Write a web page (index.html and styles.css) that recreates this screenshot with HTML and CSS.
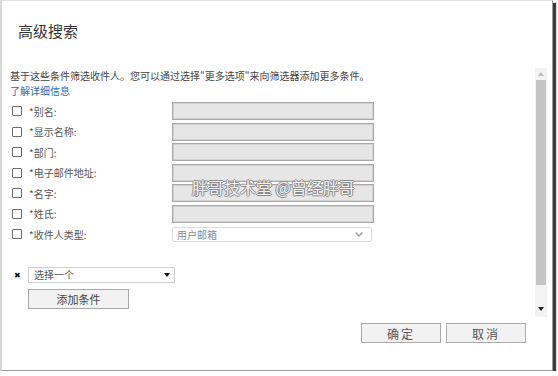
FILE: index.html
```html
<!DOCTYPE html>
<html lang="zh-CN">
<head>
    <meta charset="UTF-8">
    <title>高级搜索</title>
    <link rel="stylesheet" href="styles.css">
</head>
<body>
    <div class="dialog">
        <div class="title">高级搜索</div>
        <div class="body">
            <div class="content">
                <p class="desc">基于这些条件筛选收件人。您可以通过选择"更多选项"来向筛选器添加更多条件。</p>
                <a class="more" href="#">了解详细信息</a>
                <div class="rows">
                    <div class="row"><span class="check"></span><span class="label">*别名:</span><span class="field"></span></div>
                    <div class="row"><span class="check"></span><span class="label">*显示名称:</span><span class="field"></span></div>
                    <div class="row"><span class="check"></span><span class="label">*部门:</span><span class="field"></span></div>
                    <div class="row"><span class="check"></span><span class="label">*电子邮件地址:</span><span class="field"></span></div>
                    <div class="row"><span class="check"></span><span class="label">*名字:</span><span class="field"></span></div>
                    <div class="row"><span class="check"></span><span class="label">*姓氏:</span><span class="field"></span></div>
                    <div class="row"><span class="check"></span><span class="label">*收件人类型:</span>
                        <span class="combo">用户邮箱
                            <svg class="chevron" width="8" height="5" viewBox="0 0 8 5"><path d="M0.5 0.5 L4 4 L7.5 0.5" fill="none" stroke="#999" stroke-width="1.3"/></svg>
                        </span>
                    </div>
                </div>
                <div class="cond">
                    <span class="remove">&#x2716;</span>
                    <span class="picker">选择一个
                        <svg class="caret" width="6" height="4" viewBox="0 0 6 4"><path d="M0 0 H6 L3 4 Z" fill="#111"/></svg>
                    </span>
                </div>
                <button class="btn add">添加条件</button>
            </div>
            <div class="scrollbar">
                <div class="arrow up"><svg width="6" height="4" viewBox="0 0 6 4"><path d="M0 4 H6 L3 0 Z" fill="#bbb"/></svg></div>
                <div class="thumb"></div>
                <div class="track"></div>
                <div class="arrow down"><svg width="6" height="4" viewBox="0 0 6 4"><path d="M0 0 H6 L3 4 Z" fill="#222"/></svg></div>
            </div>
        </div>
        <div class="footer">
            <button class="btn">确定</button>
            <button class="btn">取消</button>
        </div>
        <div class="watermark">胖哥技术堂 @曾经胖哥</div>
    </div>
</body>
</html>
```

FILE: styles.css
```css
/* Base */
body {
    margin: 0;
    background-color: #fff;
    font-family: "Noto Sans CJK SC", "Noto Sans", sans-serif;
    color: #444;
}

/* Dialog frame */
.dialog {
    position: relative;
    width: 553px;
    height: 371px;
    box-sizing: border-box;
    background-color: #fff;
    border-top: 1px solid #e2e2e2;
    border-left: 2px solid #d8d8d8;
    border-right: 1px solid #9a9a9a;
    border-bottom: 1px solid #9a9a9a;
    box-shadow: 3px 3px 1px #3c3c3c;
    display: flex;
    flex-direction: column;
}

.title {
    height: 67px;
    box-sizing: border-box;
    padding: 21px 0 0 16px;
    font-size: 15px;
    line-height: 18px;
    color: #333;
}

.body {
    height: 249px;
    display: flex;
}

.content {
    flex: 1;
    padding-left: 8px;
}

.desc {
    margin: 0;
    padding-top: 1px;
    font-size: 10px;
    line-height: 14.5px;
    color: #444;
}

.more {
    display: block;
    font-size: 10px;
    line-height: 14.5px;
    color: #1a6db8;
    text-decoration: none;
}

/* Criteria rows */
.rows {
    margin-top: 3px;
}

.row {
    height: 20.5px;
    display: flex;
    align-items: center;
}

.check {
    width: 8px;
    height: 8px;
    margin-left: 2px;
    border: 1px solid #6a6a6a;
    border-radius: 1px;
    background-color: #fff;
}

.label {
    width: 143px;
    margin-left: 7px;
    font-size: 10px;
    color: #555;
}

.field {
    width: 202px;
    height: 18px;
    box-sizing: border-box;
    background-color: #e6e6e6;
    border: 1px solid #a8a8a8;
    box-shadow: inset 0 0 0 1px #d2d2d2;
}

.combo {
    width: 200px;
    height: 15px;
    margin-top: 1px;
    box-sizing: border-box;
    border: 1px solid #dcdcdc;
    border-radius: 3px;
    padding-left: 4px;
    font-size: 10px;
    line-height: 13px;
    color: #8a8a8a;
    display: flex;
    align-items: center;
    justify-content: space-between;
}

.chevron {
    margin-right: 8px;
}

/* Extra condition */
.cond {
    margin-top: 22px;
    height: 16px;
    display: flex;
    align-items: center;
}

.remove {
    width: 14px;
    text-align: center;
    font-size: 8px;
    color: #111;
}

.picker {
    width: 147px;
    height: 16px;
    margin-left: 4px;
    box-sizing: border-box;
    border: 1px solid #cfcfcf;
    padding-left: 5px;
    font-size: 10px;
    color: #555;
    display: flex;
    align-items: center;
    justify-content: space-between;
}

.caret {
    margin-right: 4px;
}

.btn {
    width: 80px;
    height: 20px;
    padding: 0;
    font-family: inherit;
    font-size: 11px;
    color: #444;
    background-color: #f2f2f2;
    border: 1px solid #a9a9a9;
    border-radius: 0;
}

.add {
    width: 101px;
    margin: 6px 0 0 18px;
    display: block;
}

/* Scrollbar */
.scrollbar {
    width: 12px;
    margin-right: 5px;
    display: flex;
    flex-direction: column;
    background-color: #f3f3f3;
}

.arrow {
    height: 12px;
    display: flex;
    align-items: center;
    justify-content: center;
}

.arrow.down {
    height: 17px;
}

.thumb {
    height: 205px;
    margin: 0 1px;
    background-color: #c4c4c4;
}

.track {
    flex: 1;
}

/* Footer */
.footer {
    display: flex;
    justify-content: flex-end;
    gap: 5px;
    padding: 6px 26px 0 0;
}

.footer .btn {
    font-size: 12px;
    letter-spacing: 2px;
    color: #555;
}

/* Watermark over the form */
.watermark {
    position: absolute;
    left: 190px;
    top: 176px;
    font-size: 16px;
    line-height: 20px;
    color: #f2f2f2;
    text-shadow: -1px 0 #8a8a8a, 1px 0 #8a8a8a, 0 -1px #8a8a8a, 0 1px #8a8a8a;
    pointer-events: none;
}
```
